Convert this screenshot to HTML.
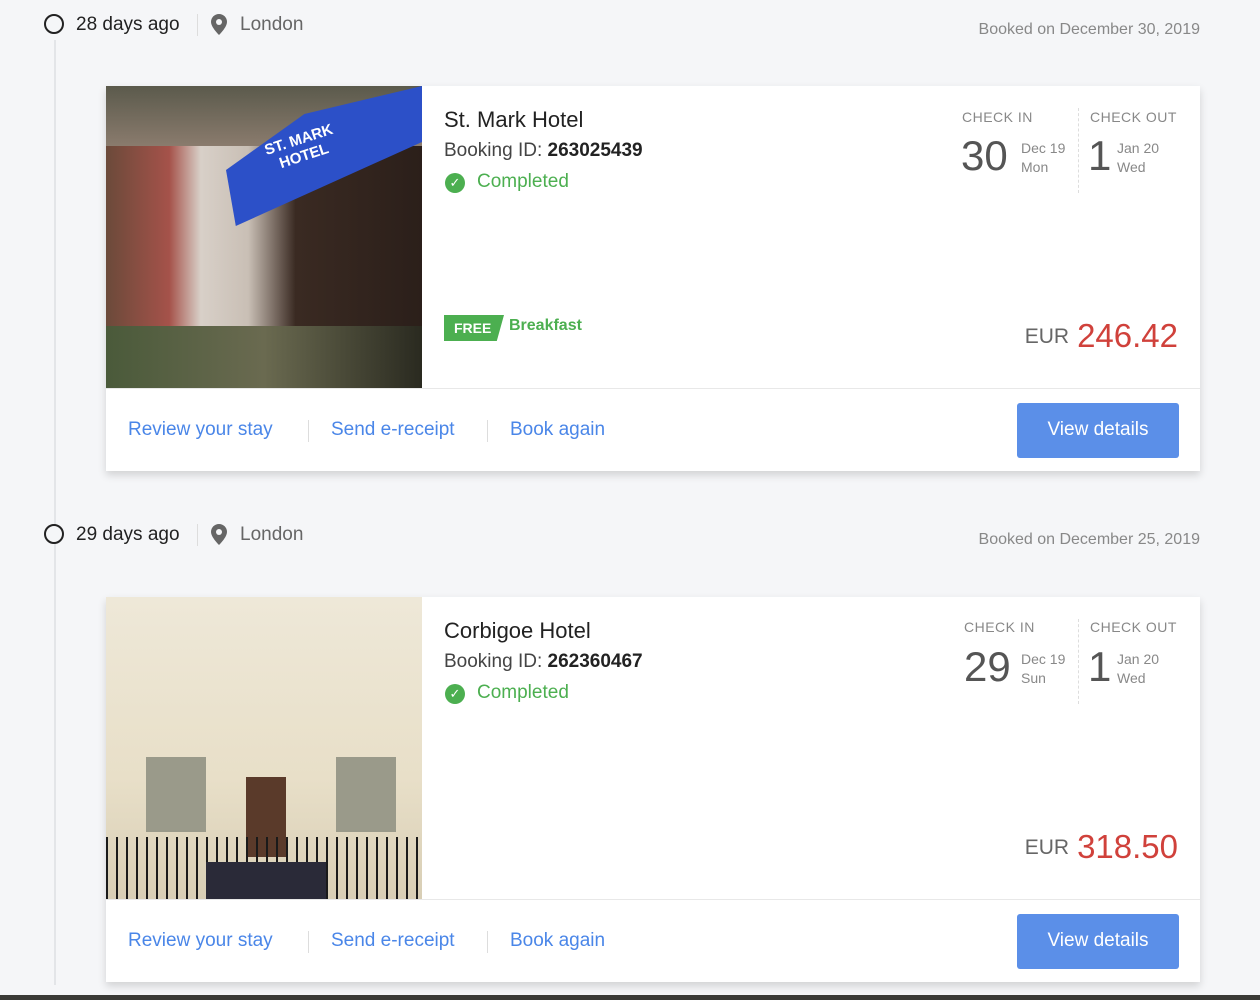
<!DOCTYPE html>
<html><head><meta charset="utf-8"><style>
*{margin:0;padding:0;box-sizing:border-box}
body{width:1260px;height:1000px;background:#f5f6f8;font-family:"Liberation Sans",sans-serif;position:relative;overflow:hidden;color:#333}
.a{position:absolute}
.line{left:54px;top:40px;width:2px;height:945px;background:#e3e5e8}
.circ{width:20px;height:20px;border:2.5px solid #222;border-radius:50%;background:#f5f6f8}
.days{font-size:19px;color:#222}
.sep{width:1px;height:22px;background:#ddd}
.loc{font-size:19px;color:#666}
.booked{font-size:16px;color:#888;right:60px}
.card{left:106px;width:1094px;height:385px;background:#fff;box-shadow:0 4px 8px rgba(0,0,0,.15)}
.foot{left:0;top:302px;width:1094px;height:1px;background:#e8e8e8}
.title{font-size:22px;color:#222}
.bid{font-size:19px;color:#444}
.bid b{color:#222}
.comp{font-size:19px;color:#4caf50}
.ck{width:20px;height:20px;border-radius:50%;background:#4caf50;color:#fff;font-size:13px;text-align:center;line-height:20px}
.lbl{font-size:14px;color:#888;letter-spacing:.5px}
.big{font-size:42px;color:#555;font-weight:300}
.sm{font-size:14px;color:#888;line-height:19px}
.vd{width:1px;height:85px;border-left:1px dashed #ddd}
.pr{right:22px;top:231px;white-space:nowrap}
.eur{font-size:21px;color:#666;margin-right:8px;vertical-align:4px}
.price{font-size:33px;color:#d0413b}
.lnk{font-size:19px;color:#4a86e8}
.vs{width:1px;height:22px;background:#ddd}
.btn{left:911px;top:317px;width:162px;height:55px;background:#5b8fe8;border-radius:3px;color:#fff;font-size:19px;text-align:center;line-height:53px}
</style></head><body>
<div class="a line"></div>

<div class="a circ" style="left:44px;top:14px"></div>
<div class="a days" style="left:76px;top:14px">28 days ago</div>
<div class="a sep" style="left:197px;top:14px"></div>
<svg class="a" style="left:211px;top:14px" width="16" height="21" viewBox="0 0 16 21"><path d="M8 0C3.6 0 0 3.5 0 7.8 0 13.5 8 21 8 21s8-7.5 8-13.2C16 3.5 12.4 0 8 0z" fill="#666"/><circle cx="8" cy="8" r="3" fill="#f5f6f8"/></svg>
<div class="a loc" style="left:240px;top:14px">London</div>
<div class="a booked" style="top:21px">Booked on December 30, 2019</div>

<div class="a card" style="top:86px">
 <div class="a" style="left:0;top:0;width:316px;height:302px;background:linear-gradient(90deg,#6b4a3a 0,#a5524a 20%,#d8d0c8 30%,#c9bfb5 45%,#3a2a22 60%,#2b1f1a 100%)"></div>
 <div class="a" style="left:0;top:0;width:316px;height:60px;background:linear-gradient(180deg,#5b5a4c,#8a7b6d)"></div>
 <div class="a" style="left:120px;top:0;width:196px;height:140px;background:#2c50c8;clip-path:polygon(40% 20%,100% 0,100% 40%,5% 100%,0 60%)"></div>
 <div class="a" style="left:160px;top:45px;color:#fff;font-weight:bold;font-size:15px;transform:rotate(-18deg);line-height:17px;text-align:center">ST. MARK<br>HOTEL</div>
 <div class="a" style="left:0;top:240px;width:316px;height:62px;background:linear-gradient(90deg,#4a5a3a,#6a6a50,#2a2a20)"></div>
 <div class="a title" style="left:338px;top:21px">St. Mark Hotel</div>
 <div class="a bid" style="left:338px;top:54px">Booking ID: <b>263025439</b></div>
 <div class="a ck" style="left:339px;top:87px">✓</div>
 <div class="a comp" style="left:371px;top:85px">Completed</div>
 <div class="a lbl" style="left:856px;top:23px">CHECK IN</div>
 <div class="a lbl" style="left:984px;top:23px">CHECK OUT</div>
 <div class="a big" style="left:855px;top:46px">30</div>
 <div class="a sm" style="left:915px;top:53px">Dec 19<br>Mon</div>
 <div class="a vd" style="left:972px;top:22px"></div>
 <div class="a big" style="left:982px;top:46px">1</div>
 <div class="a sm" style="left:1011px;top:53px">Jan 20<br>Wed</div>
 <div class="a" style="left:338px;top:229px;width:60px;height:26px;background:#4caf50;color:#fff;font-weight:bold;font-size:14px;line-height:26px;padding-left:10px;clip-path:polygon(0 0,100% 0,88% 100%,0 100%)">FREE</div>
 <div class="a" style="left:403px;top:231px;font-size:16px;color:#4caf50;font-weight:bold">Breakfast</div>
 <div class="a pr"><span class="eur">EUR</span><span class="price">246.42</span></div>
 <div class="a foot"></div>
 <div class="a lnk" style="left:22px;top:333px">Review your stay</div>
 <div class="a vs" style="left:202px;top:334px"></div>
 <div class="a lnk" style="left:225px;top:333px">Send e-receipt</div>
 <div class="a vs" style="left:381px;top:334px"></div>
 <div class="a lnk" style="left:404px;top:333px">Book again</div>
 <div class="a btn">View details</div>
</div>

<div class="a circ" style="left:44px;top:524px"></div>
<div class="a days" style="left:76px;top:524px">29 days ago</div>
<div class="a sep" style="left:197px;top:524px"></div>
<svg class="a" style="left:211px;top:524px" width="16" height="21" viewBox="0 0 16 21"><path d="M8 0C3.6 0 0 3.5 0 7.8 0 13.5 8 21 8 21s8-7.5 8-13.2C16 3.5 12.4 0 8 0z" fill="#666"/><circle cx="8" cy="8" r="3" fill="#f5f6f8"/></svg>
<div class="a loc" style="left:240px;top:524px">London</div>
<div class="a booked" style="top:531px">Booked on December 25, 2019</div>

<div class="a card" style="top:597px">
 <div class="a" style="left:0;top:0;width:316px;height:302px;background:linear-gradient(180deg,#eee8d8,#e8dfc8 60%,#d8ceb5)"></div>
 <div class="a" style="left:40px;top:160px;width:60px;height:75px;background:#9a9a8a"></div>
 <div class="a" style="left:230px;top:160px;width:60px;height:75px;background:#9a9a8a"></div>
 <div class="a" style="left:140px;top:180px;width:40px;height:80px;background:#5a3a2a"></div>
 <div class="a" style="left:0;top:240px;width:316px;height:62px;background:repeating-linear-gradient(90deg,#1a1a1a 0 2px,transparent 2px 10px)"></div>
 <div class="a" style="left:100px;top:265px;width:120px;height:37px;background:#2a2a38"></div>
 <div class="a title" style="left:338px;top:21px">Corbigoe Hotel</div>
 <div class="a bid" style="left:338px;top:54px">Booking ID: <b>262360467</b></div>
 <div class="a ck" style="left:339px;top:87px">✓</div>
 <div class="a comp" style="left:371px;top:85px">Completed</div>
 <div class="a lbl" style="left:858px;top:22px">CHECK IN</div>
 <div class="a lbl" style="left:984px;top:22px">CHECK OUT</div>
 <div class="a big" style="left:858px;top:46px">29</div>
 <div class="a sm" style="left:915px;top:53px">Dec 19<br>Sun</div>
 <div class="a vd" style="left:972px;top:22px"></div>
 <div class="a big" style="left:982px;top:46px">1</div>
 <div class="a sm" style="left:1011px;top:53px">Jan 20<br>Wed</div>
 <div class="a pr"><span class="eur">EUR</span><span class="price">318.50</span></div>
 <div class="a foot"></div>
 <div class="a lnk" style="left:22px;top:333px">Review your stay</div>
 <div class="a vs" style="left:202px;top:334px"></div>
 <div class="a lnk" style="left:225px;top:333px">Send e-receipt</div>
 <div class="a vs" style="left:381px;top:334px"></div>
 <div class="a lnk" style="left:404px;top:333px">Book again</div>
 <div class="a btn">View details</div>
</div>
<div class="a" style="left:0;top:995px;width:1260px;height:5px;background:#3a3a36"></div>
</body></html>
